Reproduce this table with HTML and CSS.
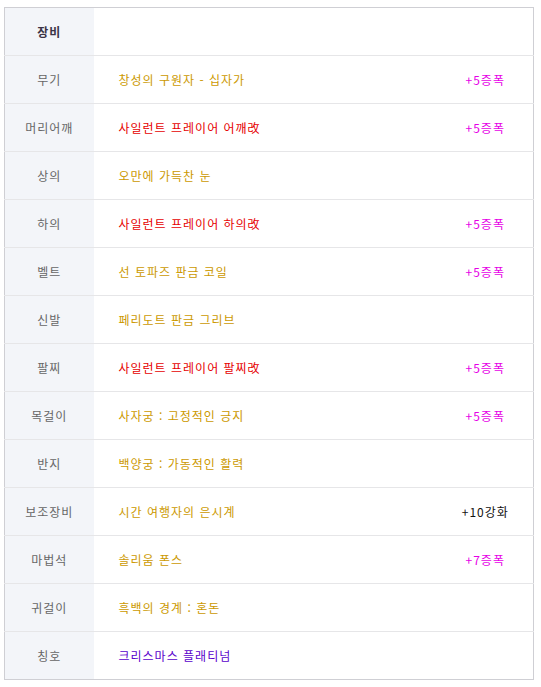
FILE: index.html
```html
<!DOCTYPE html>
<html lang="ko">
<head>
<meta charset="utf-8">
<link rel="stylesheet" href="styles.css">
</head>
<body>
<table class="equip">
  <colgroup><col class="c-label"><col class="c-name"><col class="c-opt"></colgroup>
  <tr class="head"><th>장비</th><td></td><td></td></tr>
  <tr><th>무기</th><td class="name gold">창성의 구원자 - 십자가</td><td class="opt mag">+5증폭</td></tr>
  <tr><th>머리어깨</th><td class="name red">사일런트 프레이어 어깨改</td><td class="opt mag">+5증폭</td></tr>
  <tr><th>상의</th><td class="name gold">오만에 가득찬 눈</td><td class="opt"></td></tr>
  <tr><th>하의</th><td class="name red">사일런트 프레이어 하의改</td><td class="opt mag">+5증폭</td></tr>
  <tr><th>벨트</th><td class="name gold">선 토파즈 판금 코일</td><td class="opt mag">+5증폭</td></tr>
  <tr><th>신발</th><td class="name gold">페리도트 판금 그리브</td><td class="opt"></td></tr>
  <tr><th>팔찌</th><td class="name red">사일런트 프레이어 팔찌改</td><td class="opt mag">+5증폭</td></tr>
  <tr><th>목걸이</th><td class="name gold">사자궁 : 고정적인 긍지</td><td class="opt mag">+5증폭</td></tr>
  <tr><th>반지</th><td class="name gold">백양궁 : 가동적인 활력</td><td class="opt"></td></tr>
  <tr><th>보조장비</th><td class="name gold">시간 여행자의 은시계</td><td class="opt black">+10강화</td></tr>
  <tr><th>마법석</th><td class="name gold">솔리움 폰스</td><td class="opt mag">+7증폭</td></tr>
  <tr><th>귀걸이</th><td class="name gold">흑백의 경계 : 혼돈</td><td class="opt"></td></tr>
  <tr><th>칭호</th><td class="name purple">크리스마스 플래티넘</td><td class="opt"></td></tr>
</table>
</body>
</html>
```
FILE: styles.css
```css
html, body {
  margin: 0;
  padding: 0;
  background: #fff;
}
body {
  padding: 7px 0 0 4px;
  font-family: "Noto Sans CJK KR", "Noto Sans", sans-serif;
  font-size: 12px;
  letter-spacing: 1px;
}
.equip {
  border-collapse: collapse;
  width: 530px;
  border: 1px solid #cfcfd4;
  table-layout: fixed;
}
.c-label { width: 89px; }
.c-opt { width: 96px; }
.equip tr { height: 48px; }
.equip th, .equip td {
  border-top: 1px solid #e6e6e8;
  padding: 0;
  height: 47px;
  vertical-align: middle;
  line-height: 16px;
}
.equip tr:first-child th, .equip tr:first-child td { border-top: none; }
.equip th {
  background: #f3f5f9;
  color: #666;
  font-weight: normal;
  text-align: center;
}
.equip tr.head th {
  color: #3a3346;
  font-weight: bold;
}
.name { padding-left: 25px !important; text-align: left; }
.opt { text-align: center; }
.gold { color: #cc9900; }
.red { color: #e60000; }
.mag { color: #e600e6; }
.black { color: #111; }
.purple { color: #5a00cc; }
```
